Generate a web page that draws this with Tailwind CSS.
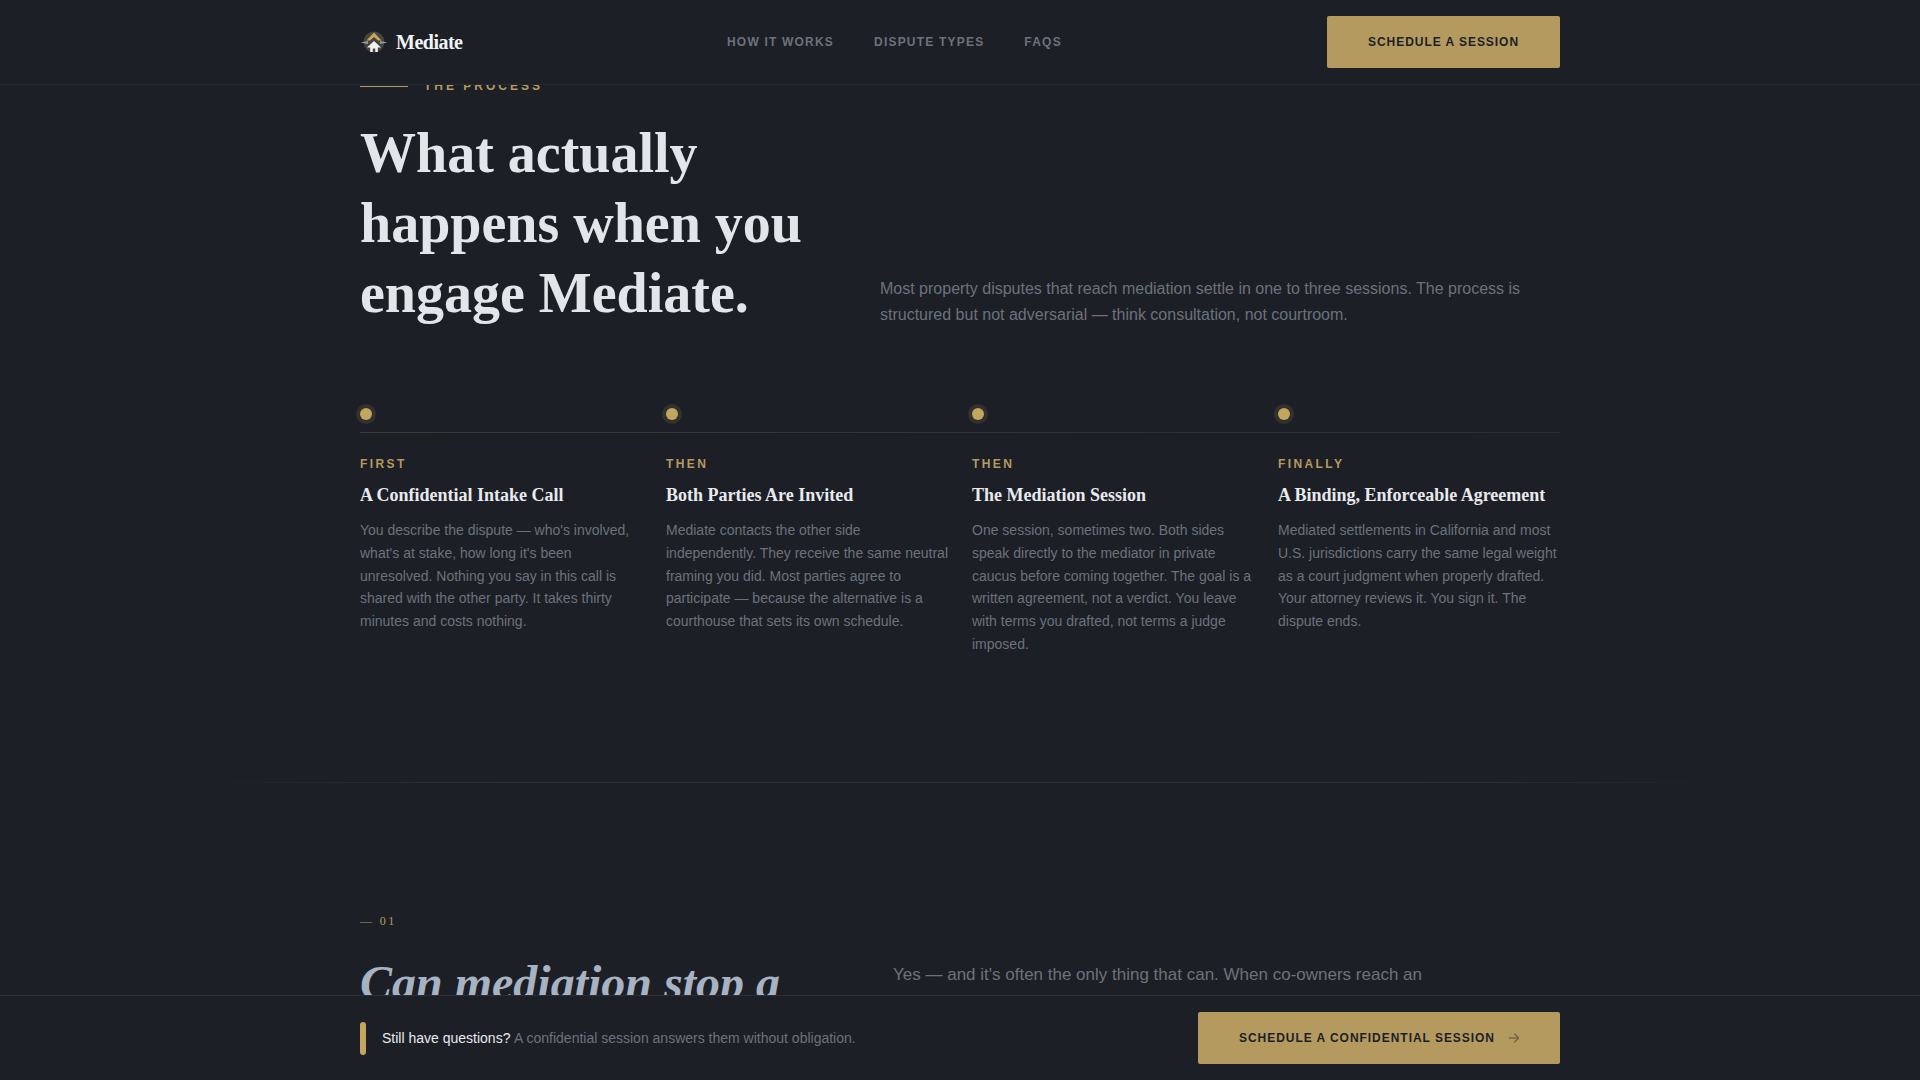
<!DOCTYPE html>
<html lang="en">
<head>
<meta charset="utf-8">
<title>Mediate</title>
<script src="https://cdn.jsdelivr.net/npm/@tailwindcss/browser@4"></script>
</head>
<body class="bg-[#1c1f26] font-['Liberation_Sans',Arial,sans-serif]">
<div class="h-[1080px] w-[1920px] flex flex-col overflow-hidden bg-[#1c1f26]">
  <header class="h-[85px] shrink-0 border-b border-[#262a31] bg-[#1c1f26] relative z-10">
    <div class="w-[1200px] h-[84px] mx-auto flex items-center justify-between">
      <div class="flex items-center gap-[8px] w-[367px]">
        <svg class="w-[28px] h-[28px]" viewBox="0 0 28 28">
          <circle cx="14" cy="14" r="10.5" fill="#45443f"/>
          <path d="M0.5 14.5 L8 13 L8 16 Z M27.5 14.5 L20 13 L20 16 Z" fill="#9a9a96"/>
          <path d="M14 4.5 L21.5 12.5 L18 12.5 L14 9 L10 12.5 L6.5 12.5 Z" fill="#c9a85c"/>
          <path d="M14 13 L21 19.5 L17.8 19.5 L17.8 24 L15.2 24 L15.2 20.5 L12.8 20.5 L12.8 24 L10.2 24 L10.2 19.5 L7 19.5 Z" fill="#f0f0ee"/>
        </svg>
        <span class="font-['Liberation_Serif',serif] font-bold text-[20px] tracking-[-0.5px] text-[#f1f3f5]">Mediate</span>
      </div>
      <nav class="flex items-center gap-10 text-[12px] font-bold tracking-[1.2px] text-[#6c727c] flex-1">
        <a>HOW IT WORKS</a><a>DISPUTE TYPES</a><a>FAQS</a>
      </nav>
      <a class="w-[233px] h-[52px] flex items-center justify-center rounded-[2px] bg-[#b59a5f] text-[#1c1f26] text-[12px] font-bold tracking-[0.96px]">SCHEDULE A SESSION</a>
    </div>
  </header>

  <main class="flex-1 min-h-0 overflow-hidden">
    <div class="w-[1200px] mx-auto -mt-[8px]">
      <div class="flex items-center gap-[16px] h-[18px]">
        <span class="w-[48px] h-px bg-[#b59a5f]"></span>
        <span class="text-[12px] font-bold tracking-[3px] text-[#b59a5f]">THE PROCESS</span>
      </div>
      <div class="grid grid-cols-[520px_1fr] items-end mt-[23px]">
        <h1 class="font-['Liberation_Serif',serif] font-bold text-[56px] leading-[70px] text-[#e2e5ea]">What actually<br>happens when you<br>engage Mediate.</h1>
        <p class="text-[16px] leading-[26px] text-[#6c727c]">Most property disputes that reach mediation settle in one to three sessions. The process is structured but not adversarial — think consultation, not courtroom.</p>
      </div>

      <div class="relative mt-[78px] grid grid-cols-4 gap-6">
        <div class="absolute left-0 right-0 top-[26px] h-px bg-gradient-to-r from-[#403c33] to-[#2a2d33]"></div>
        <div>
          <span class="block w-[12px] h-[12px] mt-[2px] rounded-full bg-[#c4a55e] shadow-[0_0_0_4px_rgba(181,154,95,0.15)]"></span>
          <p class="mt-[28px] text-[12px] leading-[18px] font-bold tracking-[2.4px] text-[#b59a5f] pt-[7px]">FIRST</p>
          <h3 class="mt-[10px] font-['Liberation_Serif',serif] font-bold text-[18px] leading-[24px] text-[#e8eaee]">A Confidential Intake Call</h3>
          <p class="mt-[12px] text-[14px] leading-relaxed text-[#6c727c]">You describe the dispute — who's involved, what's at stake, how long it's been unresolved. Nothing you say in this call is shared with the other party. It takes thirty minutes and costs nothing.</p>
        </div>
        <div>
          <span class="block w-[12px] h-[12px] mt-[2px] rounded-full bg-[#c4a55e] shadow-[0_0_0_4px_rgba(181,154,95,0.15)]"></span>
          <p class="mt-[28px] text-[12px] leading-[18px] font-bold tracking-[2.4px] text-[#b59a5f] pt-[7px]">THEN</p>
          <h3 class="mt-[10px] font-['Liberation_Serif',serif] font-bold text-[18px] leading-[24px] text-[#e8eaee]">Both Parties Are Invited</h3>
          <p class="mt-[12px] text-[14px] leading-relaxed text-[#6c727c]">Mediate contacts the other side independently. They receive the same neutral framing you did. Most parties agree to participate — because the alternative is a courthouse that sets its own schedule.</p>
        </div>
        <div>
          <span class="block w-[12px] h-[12px] mt-[2px] rounded-full bg-[#c4a55e] shadow-[0_0_0_4px_rgba(181,154,95,0.15)]"></span>
          <p class="mt-[28px] text-[12px] leading-[18px] font-bold tracking-[2.4px] text-[#b59a5f] pt-[7px]">THEN</p>
          <h3 class="mt-[10px] font-['Liberation_Serif',serif] font-bold text-[18px] leading-[24px] text-[#e8eaee]">The Mediation Session</h3>
          <p class="mt-[12px] text-[14px] leading-relaxed text-[#6c727c]">One session, sometimes two. Both sides speak directly to the mediator in private caucus before coming together. The goal is a written agreement, not a verdict. You leave with terms you drafted, not terms a judge imposed.</p>
        </div>
        <div>
          <span class="block w-[12px] h-[12px] mt-[2px] rounded-full bg-[#c4a55e] shadow-[0_0_0_4px_rgba(181,154,95,0.15)]"></span>
          <p class="mt-[28px] text-[12px] leading-[18px] font-bold tracking-[2.4px] text-[#b59a5f] pt-[7px]">FINALLY</p>
          <h3 class="mt-[10px] font-['Liberation_Serif',serif] font-bold text-[18px] leading-[24px] text-[#e8eaee]">A Binding, Enforceable Agreement</h3>
          <p class="mt-[12px] text-[14px] leading-relaxed text-[#6c727c]">Mediated settlements in California and most U.S. jurisdictions carry the same legal weight as a court judgment when properly drafted. Your attorney reviews it. You sign it. The dispute ends.</p>
        </div>
      </div>
    </div>

    <div class="w-[1536px] h-px mx-auto mt-[126.5px] bg-[linear-gradient(90deg,transparent,#2d3138_20%,#2d3138_80%,transparent)]"></div>

    <div class="w-[1200px] mx-auto mt-[129px]">
      <p class="font-['Liberation_Serif',serif] text-[12px] leading-[18px] tracking-[2.4px] text-[#b59a5f]">— 01</p>
      <div class="grid grid-cols-[533px_1fr] mt-[24px]">
        <h2 class="font-['Liberation_Serif',serif] font-bold italic text-[48px] leading-[58px] text-[#a7b2c2]">Can mediation stop a</h2>
        <p class="text-[17px] leading-[28px] text-[#6c727c] pt-[7px] w-[560px]">Yes — and it's often the only thing that can. When co-owners reach an</p>
      </div>
    </div>
  </main>

  <footer class="h-[85px] shrink-0 border-t border-[#2b2f36] bg-[#1c1f26] relative z-10">
    <div class="w-[1200px] h-[84px] mx-auto flex items-center justify-between">
      <div class="flex items-center gap-[16px]">
        <span class="w-[6px] h-[33px] rounded-full bg-[#c4a55e]"></span>
        <p class="text-[14px] text-[#6c727c]"><span class="text-[#e8eaee] mr-[0.5px]">Still have questions?</span> A confidential session answers them without obligation.</p>
      </div>
      <a class="w-[362px] h-[52px] pl-[3px] flex items-center justify-center gap-[11px] rounded-[2px] bg-[#b59a5f] text-[#1c1f26] text-[12px] font-bold tracking-[0.96px]">SCHEDULE A CONFIDENTIAL SESSION
        <svg class="w-[16px] h-[16px] text-[#75654a]" viewBox="0 0 24 24" fill="none" stroke="currentColor" stroke-width="2" stroke-linecap="round" stroke-linejoin="round"><path d="M5 12h14M13 6l6 6-6 6"/></svg>
      </a>
    </div>
  </footer>
</div>
</body>
</html>
